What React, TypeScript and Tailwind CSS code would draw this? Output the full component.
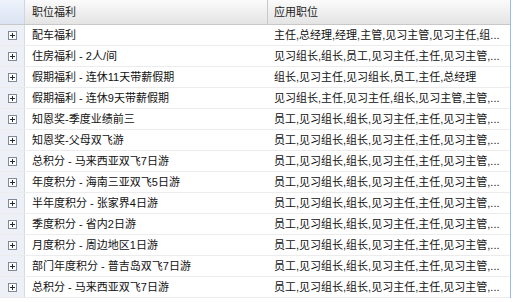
const rows: [string, string][] = [
  ["配车福利", "主任,总经理,经理,主管,见习主管,见习主任,组..."],
  ["住房福利 - 2人/间", "见习组长,组长,员工,见习主任,主任,见习主管,..."],
  ["假期福利 - 连休11天带薪假期", "组长,见习主任,见习组长,员工,主任,总经理"],
  ["假期福利 - 连休9天带薪假期", "见习组长,主任,见习主任,组长,见习主管,主管,..."],
  ["知恩奖-季度业绩前三", "员工,见习组长,组长,见习主任,主任,见习主管,..."],
  ["知恩奖-父母双飞游", "员工,见习组长,组长,见习主任,主任,见习主管,..."],
  ["总积分 - 马来西亚双飞7日游", "员工,见习组长,组长,见习主任,主任,见习主管,..."],
  ["年度积分 - 海南三亚双飞5日游", "员工,见习组长,组长,见习主任,主任,见习主管,..."],
  ["半年度积分 - 张家界4日游", "员工,见习组长,组长,见习主任,主任,见习主管,..."],
  ["季度积分 - 省内2日游", "员工,见习组长,组长,见习主任,主任,见习主管,..."],
  ["月度积分 - 周边地区1日游", "员工,见习组长,组长,见习主任,主任,见习主管,..."],
  ["部门年度积分 - 普吉岛双飞7日游", "员工,见习组长,组长,见习主任,主任,见习主管,..."],
  ["总积分 - 马来西亚双飞7日游", "员工,见习组长,组长,见习主任,主任,见习主管,..."],
];

const PlusBox = () => (
  <svg width="9" height="9" viewBox="0 0 9 9" className="block">
    <rect x="0.5" y="0.5" width="8" height="8" fill="#fff" stroke="#7f8a99" />
    <path d="M2 4.5h5M4.5 2v5" stroke="#1f2a3a" strokeWidth="1" />
  </svg>
);

export default function App() {
  return (
    <div
      className="w-[513px] h-[302px] bg-white overflow-hidden text-[11px] text-[#111]"
      style={{ fontFamily: '"Liberation Sans", "Noto Sans CJK SC", sans-serif' }}
    >
      <div className="w-[511px] border-r border-[#99bbe8]">
        {/* 表头 */}
        <div className="flex h-[25px] border-b border-[#c8c8c8] bg-gradient-to-b from-[#fbfbfb] to-[#e4e4e4] text-[#222]">
          <div className="w-[25px] shrink-0 bg-gradient-to-b from-[#eef3fb] to-[#dbe4f3] border-r border-[#cfd6e2]" />
          <div className="w-[243px] shrink-0 border-r border-[#c8c8c8] pl-[7px] flex items-center">职位福利</div>
          <div className="flex-1 pl-[6px] flex items-center">应用职位</div>
        </div>
        {rows.map(([name, pos], i) => (
          <div key={i} className="flex h-[21px] border-b border-[#ececec]">
            <div className="w-[25px] shrink-0 bg-[#edf0f7] border-r border-[#d5dae6] flex items-center justify-center">
              <PlusBox />
            </div>
            <div className="w-[243px] shrink-0 pl-[7px] flex items-center whitespace-nowrap">{name}</div>
            <div className="flex-1 min-w-0 pl-[6px] flex items-center whitespace-nowrap">{pos}</div>
          </div>
        ))}
      </div>
    </div>
  );
}
